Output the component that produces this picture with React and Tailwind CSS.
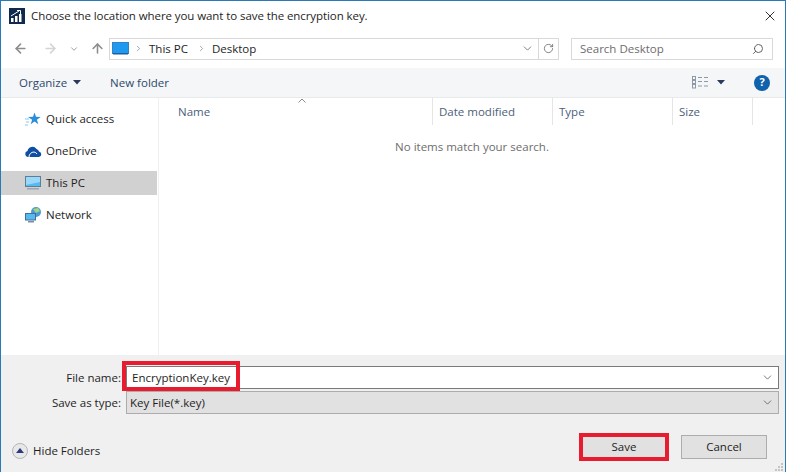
import React from 'react';
import { ArrowLeft, ArrowRight, ArrowUp, ChevronDown, ChevronRight, RotateCw, Search, X } from 'lucide-react';

const Caret = ({ className = '' }) => (
  <svg width="8" height="5" viewBox="0 0 8 5" className={className}>
    <path d="M0 0h8L4 4.500z" fill="#2a3a5c" />
  </svg>
);

const AppIcon = () => (
  <svg width="16" height="16" viewBox="0 0 16 16">
    <rect width="16" height="16" fill="#0f2a4d" />
    <path d="M2 14V10h2.500v4zM6 14V8h2.500v6zM10 14V6h2.500v8z" fill="#fff" />
    <path d="M2 8 L10 3 M8 2.500h3.500V6" stroke="#fff" strokeWidth="1" fill="none" />
  </svg>
);

const AddressMonitor = () => (
  <svg width="17" height="13" viewBox="0 0 17 13">
    <rect x="0.500" y="0.500" width="16" height="11" fill="#1e9bf0" stroke="#3a7fc0" />
    <path d="M1 11h15v1.500H1z" fill="#1f5f9f" />
  </svg>
);

const Monitor = () => (
  <svg width="16" height="15" viewBox="0 0 16 15">
    <rect x="0.500" y="0.500" width="15" height="10" fill="#58b8f0" stroke="#5b7e9c" />
    <path d="M1 1h14v5L1 9z" fill="#9bd8f8" />
    <rect x="2" y="12" width="12" height="1.500" fill="#9aa7b2" />
  </svg>
);

const StarIcon = () => (
  <svg width="16" height="15" viewBox="0 0 16 15">
    <path d="M9.500 0.500l1.500 4.300 4.600 0.100-3.700 2.800 1.400 4.600-3.800-2.700-3.800 2.700 1.400-4.600L3 4.900l5-0.100z" fill="#2a8fd8" />
    <path d="M0 7h4M1 10h3M0 13h3" stroke="#8cc6ee" strokeWidth="1" />
  </svg>
);

const CloudIcon = () => (
  <svg width="17" height="11" viewBox="0 0 17 11">
    <path d="M3 11a3 3 0 0 1-.500-5.900A5 5 0 0 1 11.500 3a3.500 3.500 0 0 1 2.500 2.500A2.800 2.800 0 0 1 14 11z" fill="#0f4fa3" />
    <path d="M4 11a5 5 0 0 1 5-5 4 4 0 0 1 3 2" stroke="#fff" strokeWidth="1" fill="none" />
  </svg>
);

const NetworkIcon = () => (
  <svg width="17" height="16" viewBox="0 0 17 16">
    <circle cx="11" cy="5" r="5" fill="#4a9ad8" />
    <path d="M8 2l5-1 2 3-4 2z" fill="#a6d47c" />
    <rect x="0.500" y="6.500" width="10" height="6.500" fill="#58b8f0" stroke="#3f6f9c" />
    <rect x="3" y="14" width="6" height="1.500" fill="#7c8c9c" />
  </svg>
);

const ViewIcon = () => (
  <svg width="17" height="13" viewBox="0 0 17 13" fill="none" stroke="#8d99a6">
    <rect x="0.500" y="0.500" width="3" height="3" />
    <rect x="0.500" y="4.500" width="3" height="3" />
    <rect x="0.500" y="8.500" width="3" height="3.500" />
    <path d="M6 1.500h4M6 5.500h4M6 10h4M12 1.500h4M12 5.500h4M12 10h4" />
  </svg>
);

const NavItem = ({ icon, label, active }) => (
  <div className={`flex h-6 w-[156px] items-center ${active ? 'bg-[#d1d1d1]' : ''}`}>
    <div className="flex w-[45px] justify-center pl-[19px]">{icon}</div>
    <span>{label}</span>
  </div>
);

const Column = ({ label, width }) => (
  <div className={`flex h-[27px] items-center border-r border-[#e5e5e5] pl-[6px] text-[#4c607a] ${width}`}>
    {label}
  </div>
);

export default function App() {
  return (
    <div
      className="relative flex h-[472px] w-[786px] flex-col overflow-hidden border-x border-t border-[#2b79b5] bg-white text-[11.500px] text-[#1e1e1e]"
      style={{ fontFamily: '"Open Sans", "Noto Sans", sans-serif' }}
    >
      {/* Title bar */}
      <div className="flex h-[30px] shrink-0 items-center pl-[8px] pr-[7px]">
        <AppIcon />
        <span className="ml-[6px] flex-1 tracking-[-0.08px]">Choose the location where you want to save the encryption key.</span>
        <X size={16} strokeWidth={1.2} className="text-black" />
      </div>

      {/* Address row */}
      <div className="flex h-[37px] shrink-0 items-center pb-[2px]">
        <div className="flex w-[108px] items-center pl-[12px] text-[#8d8d8d]">
          <ArrowLeft size={15} strokeWidth={2.500} />
          <ArrowRight size={15} strokeWidth={2.500} className="ml-[15px] text-[#d4d4d4]" />
          <ChevronDown size={10} strokeWidth={2} className="ml-[11px]" />
          <ArrowUp size={15} strokeWidth={2.500} className="ml-[11px]" />
        </div>
        <div className="flex h-[22px] w-[450px] items-center border border-[#d9d9d9]">
          <div className="ml-[2px] flex"><AddressMonitor /></div>
          <ChevronRight size={9} strokeWidth={2} className="ml-[5px] text-[#8a8a8a]" />
          <span className="ml-[6px]">This PC</span>
          <ChevronRight size={9} strokeWidth={2} className="ml-[9px] text-[#8a8a8a]" />
          <span className="ml-[6px]">Desktop</span>
          <ChevronDown size={13} strokeWidth={1.600} className="ml-auto mr-[4px] text-[#6d6d6d]" />
          <div className="flex h-full w-[20px] items-center justify-center border-l border-[#d9d9d9]">
            <RotateCw size={11} strokeWidth={1.800} className="text-[#6d6d6d]" />
          </div>
        </div>
        <div className="ml-[12px] flex h-[22px] w-[202px] items-center border border-[#d9d9d9] px-[8px] text-[#6d6d6d]">
          <span className="flex-1">Search Desktop</span>
          <Search size={12} strokeWidth={1.800} className="-scale-x-100 text-[#555]" />
        </div>
      </div>

      {/* Command bar */}
      <div className="flex h-[30px] shrink-0 items-center border-b border-[#e8e9ea] bg-[#f5f6f7] pl-[18px] pr-[15px] text-[#2c4a6b]">
        <span>Organize</span>
        <Caret className="ml-[6px]" />
        <span className="ml-[29px]">New folder</span>
        <div className="ml-auto flex"><ViewIcon /></div>
        <Caret className="ml-[8px]" />
        <div className="ml-[29px] flex h-4 w-4 items-center justify-center rounded-full bg-[#0f62ac] text-[11px] font-bold text-white">?</div>
      </div>

      {/* Main */}
      <div className="flex min-h-0 flex-1">
        <div className="flex w-[158px] shrink-0 flex-col gap-2 border-r border-[#f0f0f0] pt-[9px]">
          <NavItem icon={<StarIcon />} label="Quick access" />
          <NavItem icon={<CloudIcon />} label="OneDrive" />
          <NavItem icon={<Monitor />} label="This PC" active />
          <NavItem icon={<NetworkIcon />} label="Network" />
        </div>
        <div className="relative flex-1">
          <div className="flex">
            <Column label="Name" width="w-[274px] !pl-[19px]" />
            <Column label="Date modified" width="w-[120px]" />
            <Column label="Type" width="w-[120px]" />
            <Column label="Size" width="w-[80px]" />
          </div>
          <svg width="8" height="5" viewBox="0 0 8 5" fill="none" stroke="#8a8a8a" className="absolute left-[139px] top-0">
            <path d="M0.500 4.500L4 1l3.500 3.500" />
          </svg>
          <div className="mt-[13px] text-center text-[#6d6d6d]">No items match your search.</div>
        </div>
      </div>

      {/* Bottom panel */}
      <div className="flex h-[117px] shrink-0 flex-col bg-[#f0f0f0] pl-[10px] pr-[6px]">
        <div className="mt-[11px] flex h-[23px] items-center">
          <label className="w-[110px] text-right">File name:</label>
          <div className="relative ml-[5px] flex h-[23px] flex-1 items-center border border-[#7a7a7a] bg-white pl-[5px] pr-[4px]">
            <span className="flex-1">EncryptionKey.key</span>
            <ChevronDown size={13} strokeWidth={1.200} className="text-[#333]" />
            <div className="absolute -left-[5px] -top-[6px] h-[30px] w-[118px] border-[4px] border-[#e81c2e]" />
          </div>
        </div>
        <div className="mt-[2px] flex h-[23px] items-center">
          <label className="w-[110px] text-right">Save as type:</label>
          <div className="ml-[5px] flex h-[23px] flex-1 items-center border border-[#acacac] bg-[#e1e1e1] pl-[3px] pr-[4px]">
            <span className="flex-1">Key File(*.key)</span>
            <ChevronDown size={13} strokeWidth={1.200} className="text-[#333]" />
          </div>
        </div>
        <div className="mt-[21px] flex items-start">
          <div className="mt-[7px] flex items-center">
            <div className="ml-[1px] flex h-4 w-4 items-center justify-center rounded-full border border-[#b5b5b5] bg-[#e8e8e8]">
              <svg width="8" height="5" viewBox="0 0 8 5"><path d="M0 5h8L4 0z" fill="#2a3a7c" /></svg>
            </div>
            <span className="ml-[5px]">Hide Folders</span>
          </div>
          <div className="relative ml-auto flex h-6 w-[86px] items-center justify-center bg-[#e1e1e1]">
            Save
            <div className="absolute -inset-[2px] border-[4px] border-[#e81c2e]" />
          </div>
          <div className="ml-[14px] mr-[12px] flex h-6 w-[86px] items-center justify-center border border-[#adadad] bg-[#e1e1e1]">
            Cancel
          </div>
        </div>
      </div>

      {/* Resize grip */}
      <svg width="8" height="8" viewBox="0 0 8 8" fill="#c4c4c4" className="absolute bottom-[1px] right-[2px]">
        <path d="M6 0h2v2H6zM3 3h2v2H3zM6 3h2v2H6zM0 6h2v2H0zM3 6h2v2H3zM6 6h2v2H6z" />
      </svg>
    </div>
  );
}
